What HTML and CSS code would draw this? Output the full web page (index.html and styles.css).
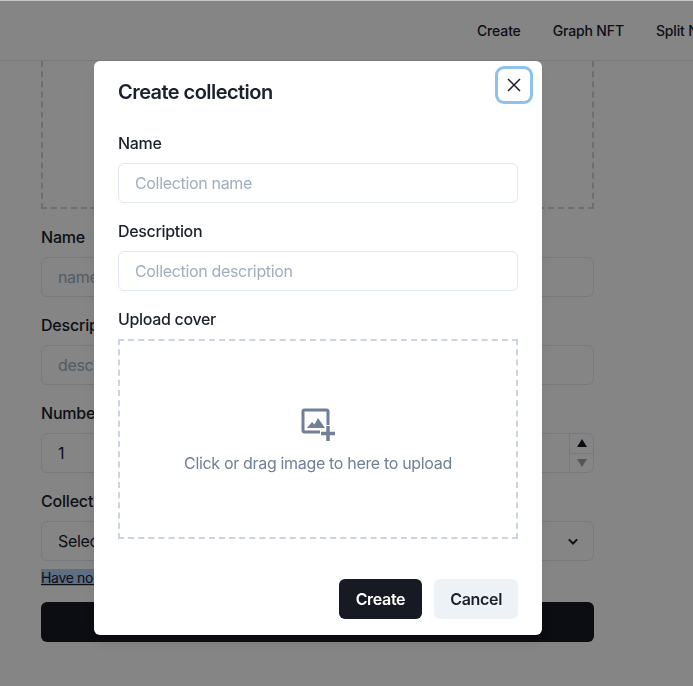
FILE: index.html
```html
<!DOCTYPE html>
<html lang="en">

<head>
  <meta charset="UTF-8" />
  <meta name="viewport" content="width=device-width, initial-scale=1.0" />
  <title>Create collection</title>
  <link rel="stylesheet" href="styles.css">
</head>

<body>
  <header class="topbar">
    <nav class="topbar-nav">
      <a href="#">Create</a>
      <a href="#">Graph NFT</a>
      <a href="#">Split NFT</a>
    </nav>
  </header>

  <main class="page">
    <div class="page-drop"></div>

    <label class="field-label">Name</label>
    <input class="text-input" type="text" placeholder="name">

    <label class="field-label">Description</label>
    <input class="text-input" type="text" placeholder="description">

    <label class="field-label">Number</label>
    <div class="number-input">
      <span class="number-value">1</span>
      <div class="stepper">
        <button type="button" class="step"><span class="arrow-up"></span></button>
        <button type="button" class="step"><span class="arrow-down"></span></button>
      </div>
    </div>

    <label class="field-label">Collection</label>
    <div class="select-input">
      <span>Select collection</span>
      <svg class="chevron" viewBox="0 0 24 24" width="20" height="20">
        <path d="M7 10l5 5 5-5" fill="none" stroke="#1a202c" stroke-width="2.4" />
      </svg>
    </div>

    <p class="hint"><a href="#" class="hint-link">Have no collection? Create one</a></p>

    <button type="button" class="submit-btn">Submit</button>
  </main>

  <div class="overlay">
    <section class="modal">
      <button type="button" class="close-btn" aria-label="Close">
        <svg viewBox="0 0 14 14" width="14" height="14">
          <path d="M1 1l12 12M13 1L1 13" fill="none" stroke="#1a202c" stroke-width="1.5" />
        </svg>
      </button>

      <h2 class="modal-title">Create collection</h2>

      <div class="modal-body">
        <label class="modal-label">Name</label>
        <input class="modal-input" type="text" placeholder="Collection name">

        <label class="modal-label">Description</label>
        <input class="modal-input" type="text" placeholder="Collection description">

        <label class="modal-label">Upload cover</label>
        <div class="dropzone">
          <svg class="drop-icon" viewBox="0 0 34 33" width="34" height="33">
            <path d="M27 17V3.500A1.500 1.500 0 0 0 25.500 2H3.500A1.500 1.500 0 0 0 2 3.500V22.500A1.500 1.500 0 0 0 3.500 24H19" fill="none" stroke="#718096" stroke-width="3" />
            <path d="M6 20l5-6 2.500 2.500 3.500-6.500 7 10z" fill="#718096" />
            <path d="M20 25.500h14M27 18v15" fill="none" stroke="#718096" stroke-width="3.500" />
          </svg>
          <span class="drop-text">Click or drag image to here to upload</span>
        </div>
      </div>

      <footer class="modal-footer">
        <button type="button" class="btn btn-dark">Create</button>
        <button type="button" class="btn btn-light">Cancel</button>
      </footer>
    </section>
  </div>
</body>

</html>
```

FILE: styles.css
```css
* {
  box-sizing: border-box;
}

html,
body {
  height: 100%;
}

body {
  margin: 0;
  overflow: hidden;
  font-family: Inter, "Liberation Sans", sans-serif;
  font-size: 16px;
  letter-spacing: -0.33px;
  color: #1a202c;
  background: #fff;
}

button,
input {
  font-family: inherit;
  letter-spacing: inherit;
}

button {
  cursor: pointer;
}

/* Top bar */
.topbar {
  height: 61px;
  padding-left: 477px;
  border-bottom: 1px solid #e2e8f0;
  overflow: hidden;
}

.topbar-nav {
  display: flex;
  gap: 32px;
  height: 60px;
  align-items: center;
  white-space: nowrap;
}

.topbar-nav a {
  font-size: 14px;
  font-weight: 500;
  letter-spacing: -0.15px;
  color: #1a202c;
  text-decoration: none;
}

/* Page behind the dialog */
.page {
  width: 553px;
  margin-left: 41px;
}

.page-drop {
  height: 148px;
  border: 2px dashed #cbd5e0;
  border-top: none;
}

.field-label {
  display: block;
  margin: 16px 0 8px;
  font-weight: 500;
  letter-spacing: -0.2px;
  line-height: 24px;
}

.text-input,
.number-input,
.select-input {
  display: flex;
  align-items: center;
  width: 100%;
  height: 40px;
  padding: 0 16px;
  border: 1px solid #e2e8f0;
  border-radius: 6px;
  font-size: 16px;
  color: #1a202c;
  background: #fff;
}

.text-input::placeholder {
  color: #a0aec0;
}

.number-input {
  position: relative;
  padding-right: 24px;
}

.stepper {
  position: absolute;
  top: 0;
  right: 0;
  bottom: 0;
  width: 24px;
  display: flex;
  flex-direction: column;
  border-left: 1px solid #e2e8f0;
}

.step {
  flex: 1;
  display: flex;
  align-items: center;
  justify-content: center;
  padding: 0;
  border: none;
  background: none;
}

.step + .step {
  border-top: 1px solid #e2e8f0;
}

.arrow-up,
.arrow-down {
  width: 0;
  height: 0;
  border-left: 5.5px solid transparent;
  border-right: 5.5px solid transparent;
}

.arrow-up {
  border-bottom: 8px solid #171923;
}

.arrow-down {
  border-top: 8px solid #a0a4a9;
}

.select-input {
  justify-content: space-between;
  padding-right: 10px;
}

.hint {
  margin: 6px 0 0;
  font-size: 14px;
  line-height: 21px;
}

.hint-link {
  color: #1a202c;
  background: #b4d5fe;
}

.submit-btn {
  display: block;
  width: 100%;
  height: 40px;
  margin-top: 14px;
  border: none;
  border-radius: 6px;
  font-size: 16px;
  font-weight: 600;
  color: #fff;
  background: #171923;
}

/* Dialog */
.overlay {
  position: fixed;
  inset: 0;
  display: flex;
  justify-content: center;
  align-items: flex-start;
  padding: 61px 57px 0 0;
  background: rgba(0, 0, 0, 0.48);
  box-shadow: inset 0 1px 0 #c4c4c4;
}

.modal {
  position: relative;
  width: 448px;
  background: #fff;
  border-radius: 6px;
  box-shadow: 0 10px 15px -3px rgba(0, 0, 0, 0.1), 0 4px 6px -2px rgba(0, 0, 0, 0.05);
}

.modal-title {
  margin: 0;
  padding: 16px 24px;
  font-size: 20px;
  font-weight: 600;
  letter-spacing: -0.55px;
  line-height: 30px;
}

.close-btn {
  position: absolute;
  top: 8px;
  right: 12px;
  width: 32px;
  height: 32px;
  display: flex;
  align-items: center;
  justify-content: center;
  padding: 0;
  border: none;
  border-radius: 6px;
  background: #fff;
  box-shadow: 0 0 0 3px rgba(66, 153, 225, 0.6);
}

.modal-body {
  padding: 8px 24px 24px;
}

.modal-label {
  display: block;
  margin: 16px 0 8px;
  font-weight: 500;
  line-height: 24px;
}

.modal-label:first-child {
  margin-top: 0;
}

.modal-input {
  display: block;
  width: 100%;
  height: 40px;
  padding: 0 16px;
  border: 1px solid #e2e8f0;
  border-radius: 6px;
  font-size: 16px;
  color: #1a202c;
}

.modal-input::placeholder {
  color: #a0aec0;
}

.dropzone {
  display: flex;
  flex-direction: column;
  align-items: center;
  justify-content: center;
  gap: 12px;
  height: 200px;
  padding-top: 2px;
  border: 2px dashed #cbd5e0;
}

.drop-text {
  color: #718096;
}

.modal-footer {
  display: flex;
  justify-content: flex-end;
  gap: 12px;
  padding: 16px 24px;
}

.btn {
  height: 40px;
  padding: 0 16px;
  border: none;
  border-radius: 6px;
  font-size: 16px;
  font-weight: 600;
  color: #1a202c;
}

.btn-dark {
  padding: 0 17px;
  color: #fff;
  background: #171923;
}

.btn-light {
  background: #edf2f7;
}
```
